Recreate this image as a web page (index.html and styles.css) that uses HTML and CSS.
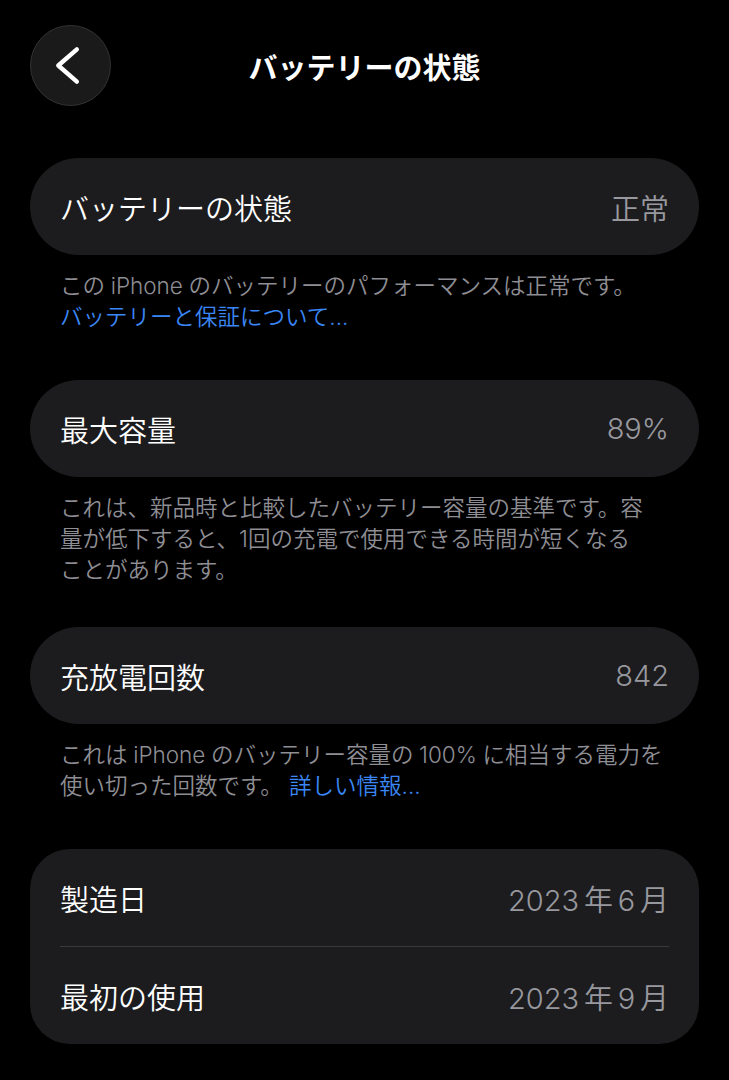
FILE: index.html
```html
<!DOCTYPE html>
<html lang="ja">
<head>
    <meta charset="UTF-8">
    <meta name="viewport" content="width=device-width, initial-scale=1.0">
    <title>バッテリーの状態</title>
    <link rel="stylesheet" href="styles.css">
</head>
<body>

    <div class="page">

        <!-- Navigation Bar -->
        <nav class="nav">
            <a href="#" class="back-button" aria-label="戻る">
                <svg width="81" height="81" viewBox="0 0 81 81">
                    <path d="M47 24 L28 40.5 L47 57" fill="none" stroke="#ffffff" stroke-width="4.5" stroke-linecap="round" stroke-linejoin="round"/>
                </svg>
            </a>
            <div class="nav-title">バッテリーの状態</div>
            <div></div>
        </nav>

        <!-- Battery Health -->
        <div class="section first">
            <div class="card pill">
                <div class="row">
                    <span class="row-label">バッテリーの状態</span>
                    <span class="row-value">正常</span>
                </div>
            </div>
            <p class="footer wide">
                この&#8197;iPhone&#8197;のバッテリーのパフォーマンスは正常です。<br>
                <a href="#" class="link">バッテリーと保証について...</a>
            </p>
        </div>

        <!-- Maximum Capacity -->
        <div class="section">
            <div class="card pill">
                <div class="row">
                    <span class="row-label">最大容量</span>
                    <span class="row-value">89%</span>
                </div>
            </div>
            <p class="footer tight">
                これは、新品時と比較したバッテリー容量の基準です。容<br>
                量が低下すると、1回の充電で使用できる時間が短くなる<br>
                ことがあります。
            </p>
        </div>

        <!-- Cycle Count -->
        <div class="section">
            <div class="card pill">
                <div class="row">
                    <span class="row-label">充放電回数</span>
                    <span class="row-value">842</span>
                </div>
            </div>
            <p class="footer wide">
                これは&#8197;iPhone&#8197;のバッテリー容量の&#8197;100%&#8197;に相当する電力を<br>
                使い切った回数です。 <a href="#" class="link">詳しい情報...</a>
            </p>
        </div>

        <!-- Dates -->
        <div class="section">
            <div class="card group">
                <div class="row">
                    <span class="row-label">製造日</span>
                    <span class="row-value">2023&#8198;年&#8198;6&#8198;月</span>
                </div>
                <div class="divider"></div>
                <div class="row">
                    <span class="row-label">最初の使用</span>
                    <span class="row-value">2023&#8198;年&#8198;9&#8198;月</span>
                </div>
            </div>
        </div>

    </div>

</body>
</html>
```

FILE: styles.css
```css
/* General Styles */
body {
    margin: 0;
    padding: 0;
    background-color: #000000;
    color: #ffffff;
    font-family: "Inter", "Noto Sans CJK JP", sans-serif;
}

.page {
    padding: 25px 30px 0;
}

/* Navigation Bar */
.nav {
    display: grid;
    grid-template-columns: 81px 1fr 81px;
    align-items: center;
    height: 81px;
}

.back-button {
    width: 81px;
    height: 81px;
    box-sizing: border-box;
    border-radius: 50%;
    background-color: #1a1a1b;
    border: 1px solid #333335;
    display: flex;
    justify-content: center;
    align-items: center;
}

.back-button svg {
    display: block;
}

.nav-title {
    text-align: center;
    font-size: 29px;
    font-weight: bold;
}

/* Sections */
.section.first {
    margin-top: 52px;
}

/* Cards */
.card {
    background-color: #1c1c1e;
    padding: 0 30px;
}

.card.pill {
    border-radius: 49px;
}

.card.group {
    border-radius: 40px;
}

.row {
    height: 97px;
    display: flex;
    justify-content: space-between;
    align-items: center;
    font-size: 29px;
    font-weight: 350;
}

.row-label {
    color: #ffffff;
}

.row-value {
    color: #98989f;
}

.divider {
    height: 1px;
    background-color: #3a3a3c;
}

/* Footer Notes */
.footer {
    margin: 0 0 46px;
    padding: 15px 30px 0;
    font-size: 22.5px;
    font-weight: 350;
    line-height: 31px;
    color: #8e8e94;
}

.footer.wide {
    margin-bottom: 48px;
}

.footer.tight {
    margin-bottom: 42px;
}

.link {
    color: #3a87f5;
    text-decoration: none;
}
```
